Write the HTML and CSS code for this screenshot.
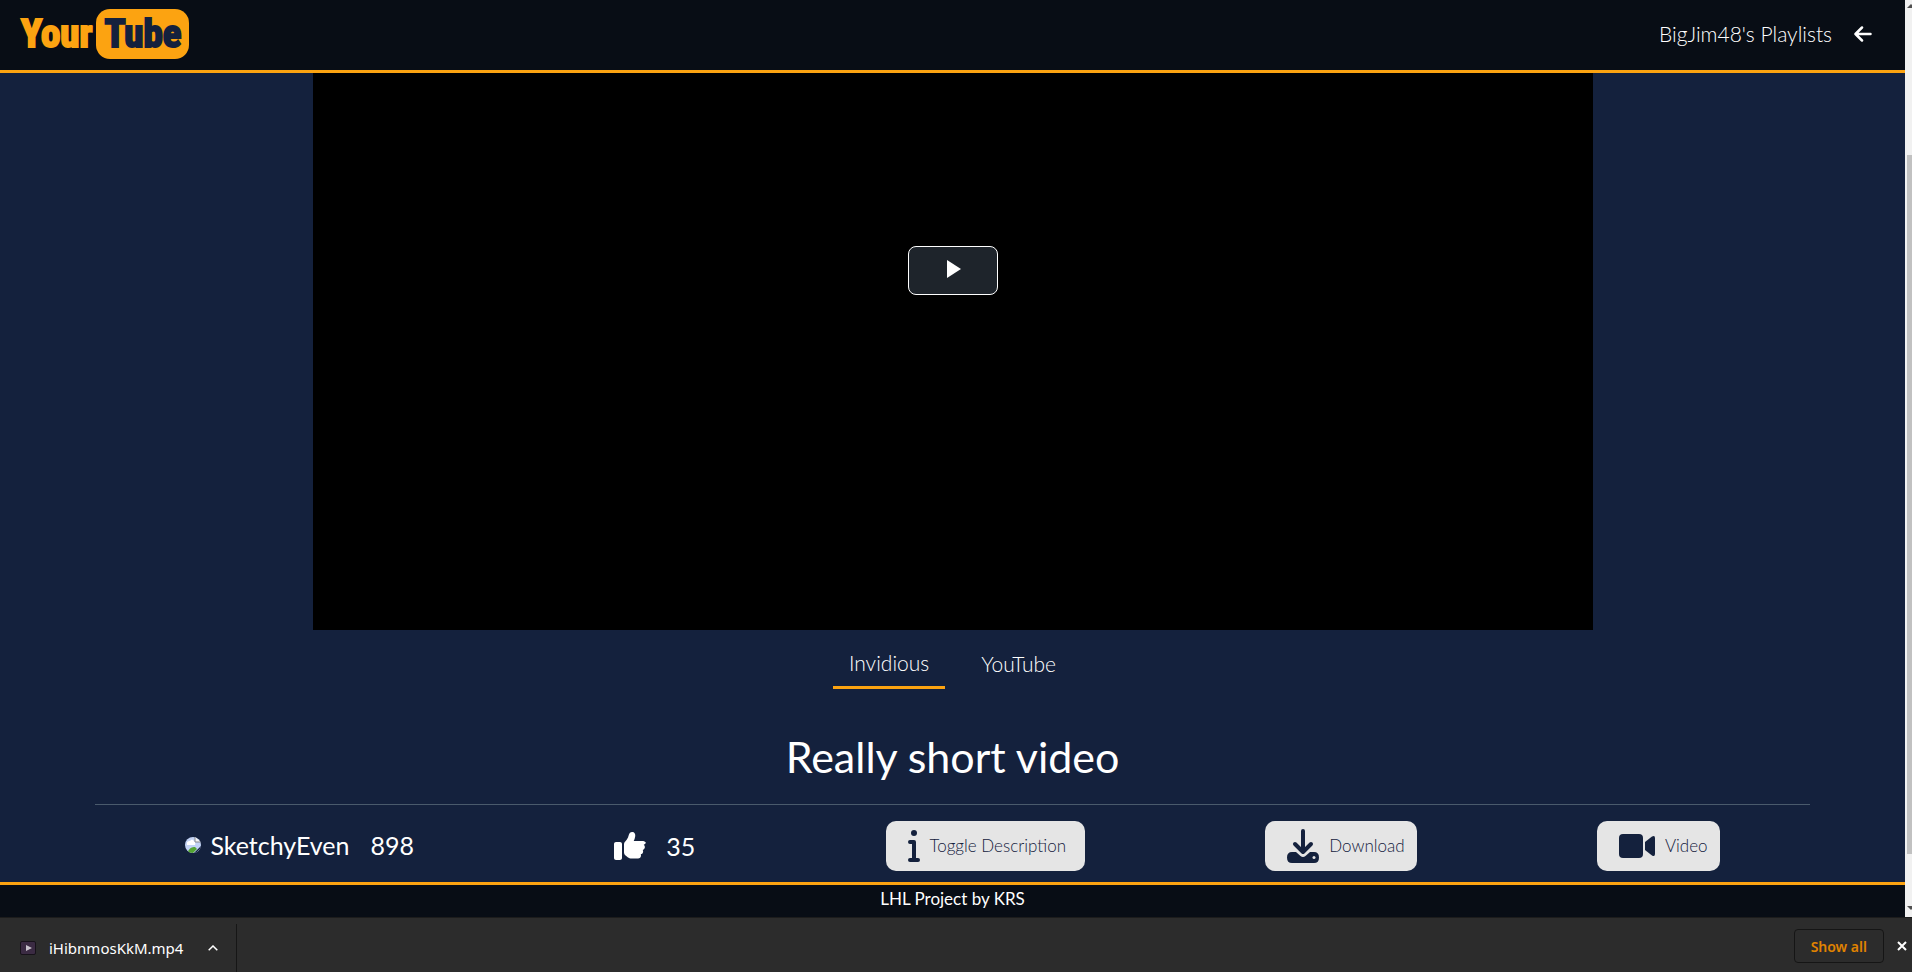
FILE: index.html
```
<!DOCTYPE html>
<html lang="en">
<head>
<meta charset="utf-8">
<title>YourTube</title>
<link rel="stylesheet" href="styles.css">
</head>
<body>
<div class="viewport">
  <div class="page">
    <header class="header">
      <a class="logo" href="#"><span class="logo-your">Your</span><span class="logo-tube">Tube</span></a>
      <nav class="nav">
        <a class="nav-link" href="#">BigJim48's Playlists</a>
        <button class="icon-button" aria-label="Back"><svg class="back-icon" viewBox="0 0 18 16"><path d="M8 1.5 1.5 8 8 14.500M2 8H16.500"/></svg></button>
      </nav>
    </header>
    <main class="main">
      <div class="player">
        <button class="play" aria-label="Play video"><svg class="play-icon" viewBox="0 0 14 18"><path d="M0 0 14 9 0 18Z"/></svg></button>
      </div>
      <div class="tabs">
        <button class="tab tab-active">Invidious</button>
        <button class="tab">YouTube</button>
      </div>
      <h1 class="title">Really short video</h1>
      <section class="info">
        <div class="channel">
          <svg class="avatar" viewBox="0 0 16 16"><defs><clipPath id="round"><circle cx="8" cy="8" r="8"/></clipPath></defs><g clip-path="url(#round)"><path fill="#c3d3f5" d="M0 0H16V16H0Z"/><path fill="#fff" d="M2 8Q1 4 5 4 7 1 9 4 11 5 10 8Z"/><path fill="#55a532" d="M2 16Q5 9 10 10L12 12 8 16Z"/><path fill="#f4f4f4" stroke="#8a8a8a" d="M10 0V5H16"/><path fill="#14213d" d="M16 9 9 16H11L16 11Z"/></g></svg>
          <span>SketchyEven</span><span class="subs">898</span>
        </div>
        <div class="likes">
          <svg class="like-icon" viewBox="0 0 512 512"><path d="M128 448V224c0-17.700-14.300-32-32-32H32c-17.700 0-32 14.300-32 32v224c0 17.700 14.300 32 32 32h64c17.700 0 32-14.300 32-32zM512 224c0-26.500-21.500-48-48-48H315c12-22 21-52 25-80 5-35-15-62-45-64-30-3-50 17-57 44-8 30-17 56-35 78l-30 36c-10 12-13 23-13 40v126c0 22 9 40 26 53l33 25c19 14 38 22 62 22h103c27 0 48-21 48-48 0-7-1-13-4-19 22-4 38-23 38-47 0-9-2-17-6-24 20-6 34-24 34-46 0-16-7-30-18-38 21-6 36-26 36-50z"/></svg>
          <span>35</span>
        </div>
        <button class="action action-wide"><svg class="info-icon" viewBox="0 0 12 32"><circle cx="6" cy="3" r="3"/><path d="M2 12H6V30M2 30H10"/></svg>Toggle Description</button>
        <button class="action"><svg class="download-icon" viewBox="0 0 32 34"><path class="fill" d="M5 23H9L13.500 27Q16 29 18.500 27L23 23H27Q32 23 32 28.500T27 34H5Q0 34 0 28.500T5 23Z"/><path class="line" d="M16 2V22M8 15 16 23 24 15"/><circle class="dot" cx="27" cy="28.500" r="1.500"/></svg>Download</button>
        <button class="action"><svg class="video-icon" viewBox="0 0 36 24"><rect width="24" height="24" rx="4"/><path d="M26 8 33 2.500Q36 1 36 4V20Q36 23 33 21.500L26 16Z"/></svg>Video</button>
      </section>
    </main>
    <footer class="footer">LHL Project by KRS</footer>
  </div>
  <div class="scrollbar"><span class="arrow arrow-up"></span><span class="thumb"></span><span class="arrow arrow-down"></span></div>
</div>
<div class="downloads">
  <div class="file">
    <svg class="file-icon" viewBox="0 0 16 14"><rect x=".5" y=".5" width="15" height="13" rx="1.500" fill="#3b2b43" stroke="#17121a"/><path d="M6 4 12 7 6 10Z" fill="#c9c3cc"/></svg>
    <span>iHibnmosKkM.mp4</span>
    <button class="icon-button" aria-label="File options"><svg class="chevron" viewBox="0 0 10 6"><path d="M.7 5.300 5 1 9.300 5.300"/></svg></button>
  </div>
  <button class="show-all">Show all</button>
  <button class="icon-button" aria-label="Close"><svg class="close" viewBox="0 0 10 10"><path d="M1 1 9 9M9 1 1 9"/></svg></button>
</div>
</body>
</html>
```
FILE: styles.css
```
* { box-sizing: border-box; }
body {
  margin: 0;
  height: 100vh;
  display: flex;
  flex-direction: column;
  background: #14213d;
  color: #fff;
  font-family: Lato, sans-serif;
}
button { font: inherit; color: inherit; border: 0; background: none; padding: 0; }
a { color: inherit; text-decoration: none; }
svg { display: block; flex: none; }

.viewport { flex: 1; min-height: 0; display: flex; }
.page { flex: 1; display: flex; flex-direction: column; }

.header {
  display: flex;
  align-items: center;
  justify-content: space-between;
  height: 73px;
  padding: 0 33px 2px 21px;
  background: #080d15;
  border-bottom: 3px solid #fca311;
}
.logo {
  display: flex;
  align-items: center;
  gap: 4px;
  color: #fca311;
  font: bold 39px/50px "Liberation Sans Narrow", "Roboto Condensed", sans-serif;
}
.logo-your { -webkit-text-stroke: 2px #fca311; }
.logo-tube {
  padding: 0 8px;
  border-radius: 14px;
  background: #fca311;
  color: #14213d;
  -webkit-text-stroke: 2px #14213d;
}
.nav { display: flex; align-items: center; gap: 22px; }
.nav-link { font-size: 21px; line-height: 24px; font-weight: 300; }
.back-icon { width: 18px; height: 16px; fill: none; stroke: #fff; stroke-width: 2.500; stroke-linecap: round; stroke-linejoin: round; }

.main { flex: 1; display: flex; flex-direction: column; align-items: center; }
.player {
  flex: 1;
  width: 100%;
  max-width: 1280px;
  padding-top: 173px;
  background: #000;
}
.play {
  display: flex;
  align-items: center;
  justify-content: center;
  width: 90px;
  height: 49px;
  margin: 0 auto;
  padding: 0 0 3px 2px;
  border: 1px solid #fff;
  border-radius: 8px;
  background: #1e242b;
}
.play-icon { width: 14px; height: 18px; fill: #fff; }

.tabs { display: flex; gap: 20px; padding-top: 16px; }
.tab {
  height: 43px;
  padding: 0 16px 8px;
  font-size: 21px;
  font-weight: 300;
}
.tab-active { border-bottom: 3px solid #fca311; }
.title {
  width: 90%;
  margin: 0;
  padding: 40px 0 20px;
  border-bottom: 1px solid #4a5a6c;
  font-size: 43px;
  line-height: 55px;
  font-weight: 400;
  text-align: center;
}
.info {
  display: flex;
  align-items: center;
  justify-content: space-around;
  width: 90%;
  padding: 16px 0 11px;
  font-size: 25px;
  line-height: 30px;
}
.channel { display: flex; align-items: center; gap: 9px; padding: 0 10px 2px 0; }
.subs { margin-left: 12px; }
.avatar { width: 16px; height: 16px; }
.likes { display: flex; align-items: center; gap: 20px; padding: 0 10px; }
.like-icon { width: 32px; height: 32px; fill: #fff; }
.action {
  display: flex;
  align-items: center;
  gap: 10px;
  height: 50px;
  padding: 0 12px 0 22px;
  border-radius: 10px;
  background: #e5e5e5;
  color: #14213d;
  font-size: 17px;
  line-height: 20px;
  font-weight: 300;
}
.action-wide { padding-right: 19px; }
.info-icon { width: 12px; height: 32px; fill: #14213d; }
.info-icon path { fill: none; stroke: #14213d; stroke-width: 4; stroke-linecap: round; stroke-linejoin: round; }
.download-icon { width: 32px; height: 34px; }
.download-icon .fill { fill: #14213d; stroke: none; }
.download-icon .line { fill: none; stroke: #14213d; stroke-width: 4; stroke-linecap: round; stroke-linejoin: round; }
.download-icon .dot { fill: #e5e5e5; }
.video-icon { width: 36px; height: 24px; fill: #14213d; }

.footer {
  height: 35px;
  border-top: 3px solid #fca311;
  background: #080d15;
  font-size: 17px;
  line-height: 28px;
  text-align: center;
}

.scrollbar {
  display: flex;
  flex-direction: column;
  width: 7px;
  padding: 4px 0 7px 2px;
  background: #f1f1f1;
  overflow: hidden;
}
.thumb { flex: 1; margin: 147px 0 52px; background: #c1c1c1; }
.arrow { width: 8px; border: 4px solid transparent; }
.arrow-up { border-top: 0; border-bottom-color: #505050; }
.arrow-down { border-bottom: 0; border-top-color: #505050; }

.downloads {
  display: flex;
  align-items: center;
  gap: 13px;
  height: 55px;
  padding: 2px 5px 0 0;
  border-top: 1px solid #1c1c1c;
  background: #2c2c2c;
  font-family: "Noto Sans", sans-serif;
  font-size: 15px;
}
.file {
  display: flex;
  align-items: center;
  align-self: flex-end;
  height: 48px;
  margin-right: auto;
  padding: 0 18px 0 20px;
  border-right: 1px solid #161616;
}
.file-icon { width: 16px; height: 14px; margin-right: 13px; }
.chevron { width: 10px; height: 6px; margin-left: 25px; fill: none; stroke: #fff; stroke-width: 1.500; }
.show-all {
  height: 34px;
  padding: 0 16px;
  border: 1px solid #151515;
  border-radius: 4px;
  color: #e08300;
  font-size: 14px;
  font-weight: 600;
}
.close { width: 10px; height: 10px; fill: none; stroke: #fff; stroke-width: 2; }
```
